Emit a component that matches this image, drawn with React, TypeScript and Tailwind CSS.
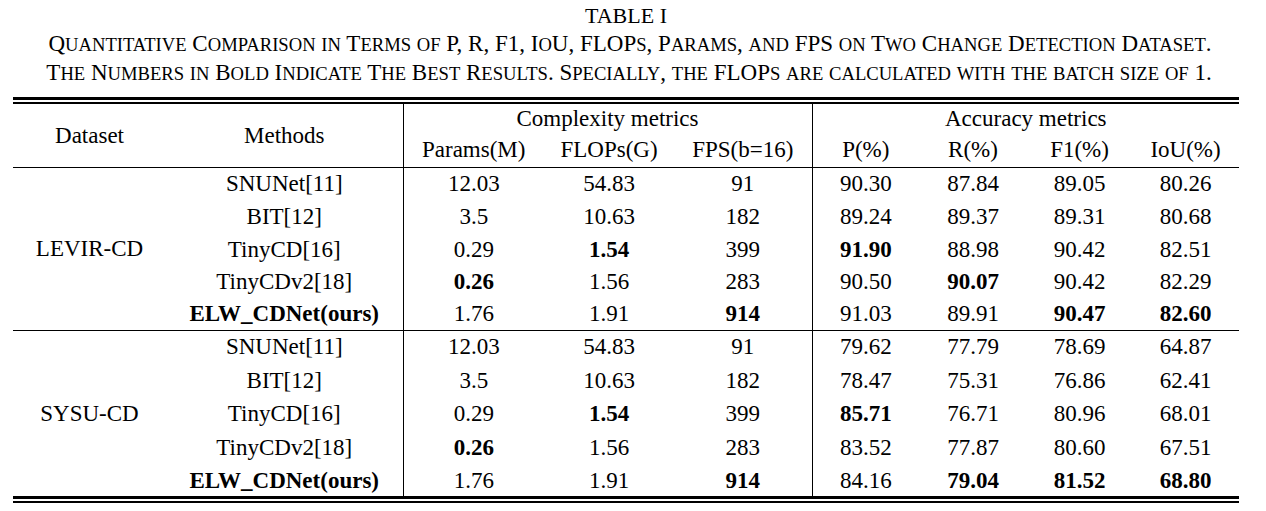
const serif = "font-['Liberation_Serif','Times_New_Roman',serif]";

type Row = string[];

const levir: Row[] = [
  ['SNUNet[11]', '12.03', '54.83', '91', '90.30', '87.84', '89.05', '80.26'],
  ['BIT[12]', '3.5', '10.63', '182', '89.24', '89.37', '89.31', '80.68'],
  ['TinyCD[16]', '0.29', '*1.54', '399', '*91.90', '88.98', '90.42', '82.51'],
  ['TinyCDv2[18]', '*0.26', '1.56', '283', '90.50', '*90.07', '90.42', '82.29'],
  ['*ELW_CDNet(ours)', '1.76', '1.91', '*914', '91.03', '89.91', '*90.47', '*82.60'],
];

const sysu: Row[] = [
  ['SNUNet[11]', '12.03', '54.83', '91', '79.62', '77.79', '78.69', '64.87'],
  ['BIT[12]', '3.5', '10.63', '182', '78.47', '75.31', '76.86', '62.41'],
  ['TinyCD[16]', '0.29', '*1.54', '399', '*85.71', '76.71', '80.96', '68.01'],
  ['TinyCDv2[18]', '*0.26', '1.56', '283', '83.52', '77.87', '80.60', '67.51'],
  ['*ELW_CDNet(ours)', '1.76', '1.91', '*914', '84.16', '*79.04', '*81.52', '*68.80'],
];

// lowercase runs become smaller capitals, like the IEEE caption style
const SmallCaps = ({ text }: { text: string }) => (
  <>
    {text.split(/([a-z]+)/).map((p, i) =>
      /[a-z]/.test(p) ? (
        <span key={i} className="text-[0.81em]">{p.toUpperCase()}</span>
      ) : (
        <span key={i}>{p}</span>
      )
    )}
  </>
);

const Cell = ({ v, left }: { v: string; left?: boolean }) => {
  const bold = v.startsWith('*');
  return (
    <td className={`p-0 text-center ${left ? 'border-l border-black' : ''} ${bold ? 'font-bold' : ''}`}>
      {bold ? v.slice(1) : v}
    </td>
  );
};

const Section = ({ name, rows, heights, last }: { name: string; rows: Row[]; heights: string[]; last?: boolean }) => (
  <>
    {rows.map((r, i) => (
      <tr key={i} className={`${heights[i]} ${i === rows.length - 1 && !last ? 'border-b border-black' : ''}`}>
        {i === 0 && (
          <td rowSpan={rows.length} className="p-0 text-center align-middle">
            {name}
          </td>
        )}
        {r.map((v, j) => (
          <Cell key={j} v={v} left={j === 1 || j === 4} />
        ))}
      </tr>
    ))}
  </>
);

export default function App() {
  return (
    <div className={`w-[1266px] h-[511px] bg-white text-black overflow-hidden ${serif}`}>
      <div className="ml-[13px] w-[1226px] pt-[2px] text-center leading-[28px]">
        <div className="text-[22px]">TABLE I</div>
        <div className="whitespace-nowrap text-[23px] ml-[8px]">
          <SmallCaps text="Quantitative Comparison in Terms of P, R, F1, IoU, FLOPs, Params, and FPS on Two Change Detection Dataset." />
        </div>
        <div className="whitespace-nowrap text-[23px] ml-[6px]">
          <SmallCaps text="The Numbers in Bold Indicate The Best Results. Specially, the FLOPs are calculated with the batch size of 1." />
        </div>
      </div>

      <div className="ml-[13px] w-[1226px] mt-[9px] flex flex-col">
        <div className="h-[3px] bg-black" />
        <div className="h-[2px]" />
        <div className="h-[2px] bg-black" />
        <table className="table-fixed border-collapse w-full text-[23px] leading-none">
          <colgroup>
            <col className="w-[153px]" />
            <col className="w-[237px]" />
            <col className="w-[141px]" />
            <col className="w-[130px]" />
            <col className="w-[138px]" />
            <col className="w-[107px]" />
            <col className="w-[108px]" />
            <col className="w-[105px]" />
            <col className="w-[107px]" />
          </colgroup>
          <thead>
            <tr className="h-[29px]">
              <th rowSpan={2} className="p-0 font-normal text-center align-middle">Dataset</th>
              <th rowSpan={2} className="p-0 font-normal text-center align-middle">Methods</th>
              <th colSpan={3} className="p-0 font-normal text-center border-l border-black">Complexity metrics</th>
              <th colSpan={4} className="p-0 font-normal text-center border-l border-black">Accuracy metrics</th>
            </tr>
            <tr className="h-[34px] border-b border-black">
              <th className="p-0 font-normal text-center border-l border-black">Params(M)</th>
              <th className="p-0 font-normal text-center">FLOPs(G)</th>
              <th className="p-0 font-normal text-center">FPS(b=16)</th>
              <th className="p-0 font-normal text-center border-l border-black">P(%)</th>
              <th className="p-0 font-normal text-center">R(%)</th>
              <th className="p-0 font-normal text-center">F1(%)</th>
              <th className="p-0 font-normal text-center">IoU(%)</th>
            </tr>
          </thead>
          <tbody>
            <Section name="LEVIR-CD" rows={levir} heights={['h-[33px]', 'h-[33px]', 'h-[32px]', 'h-[32px]', 'h-[33px]']} />
            <Section name="SYSU-CD" rows={sysu} heights={['h-[33px]', 'h-[34px]', 'h-[33px]', 'h-[34px]', 'h-[32px]']} last />
          </tbody>
        </table>
        <div className="h-[3px] bg-black" />
        <div className="h-[2px]" />
        <div className="h-[2px] bg-black" />
      </div>
    </div>
  );
}
